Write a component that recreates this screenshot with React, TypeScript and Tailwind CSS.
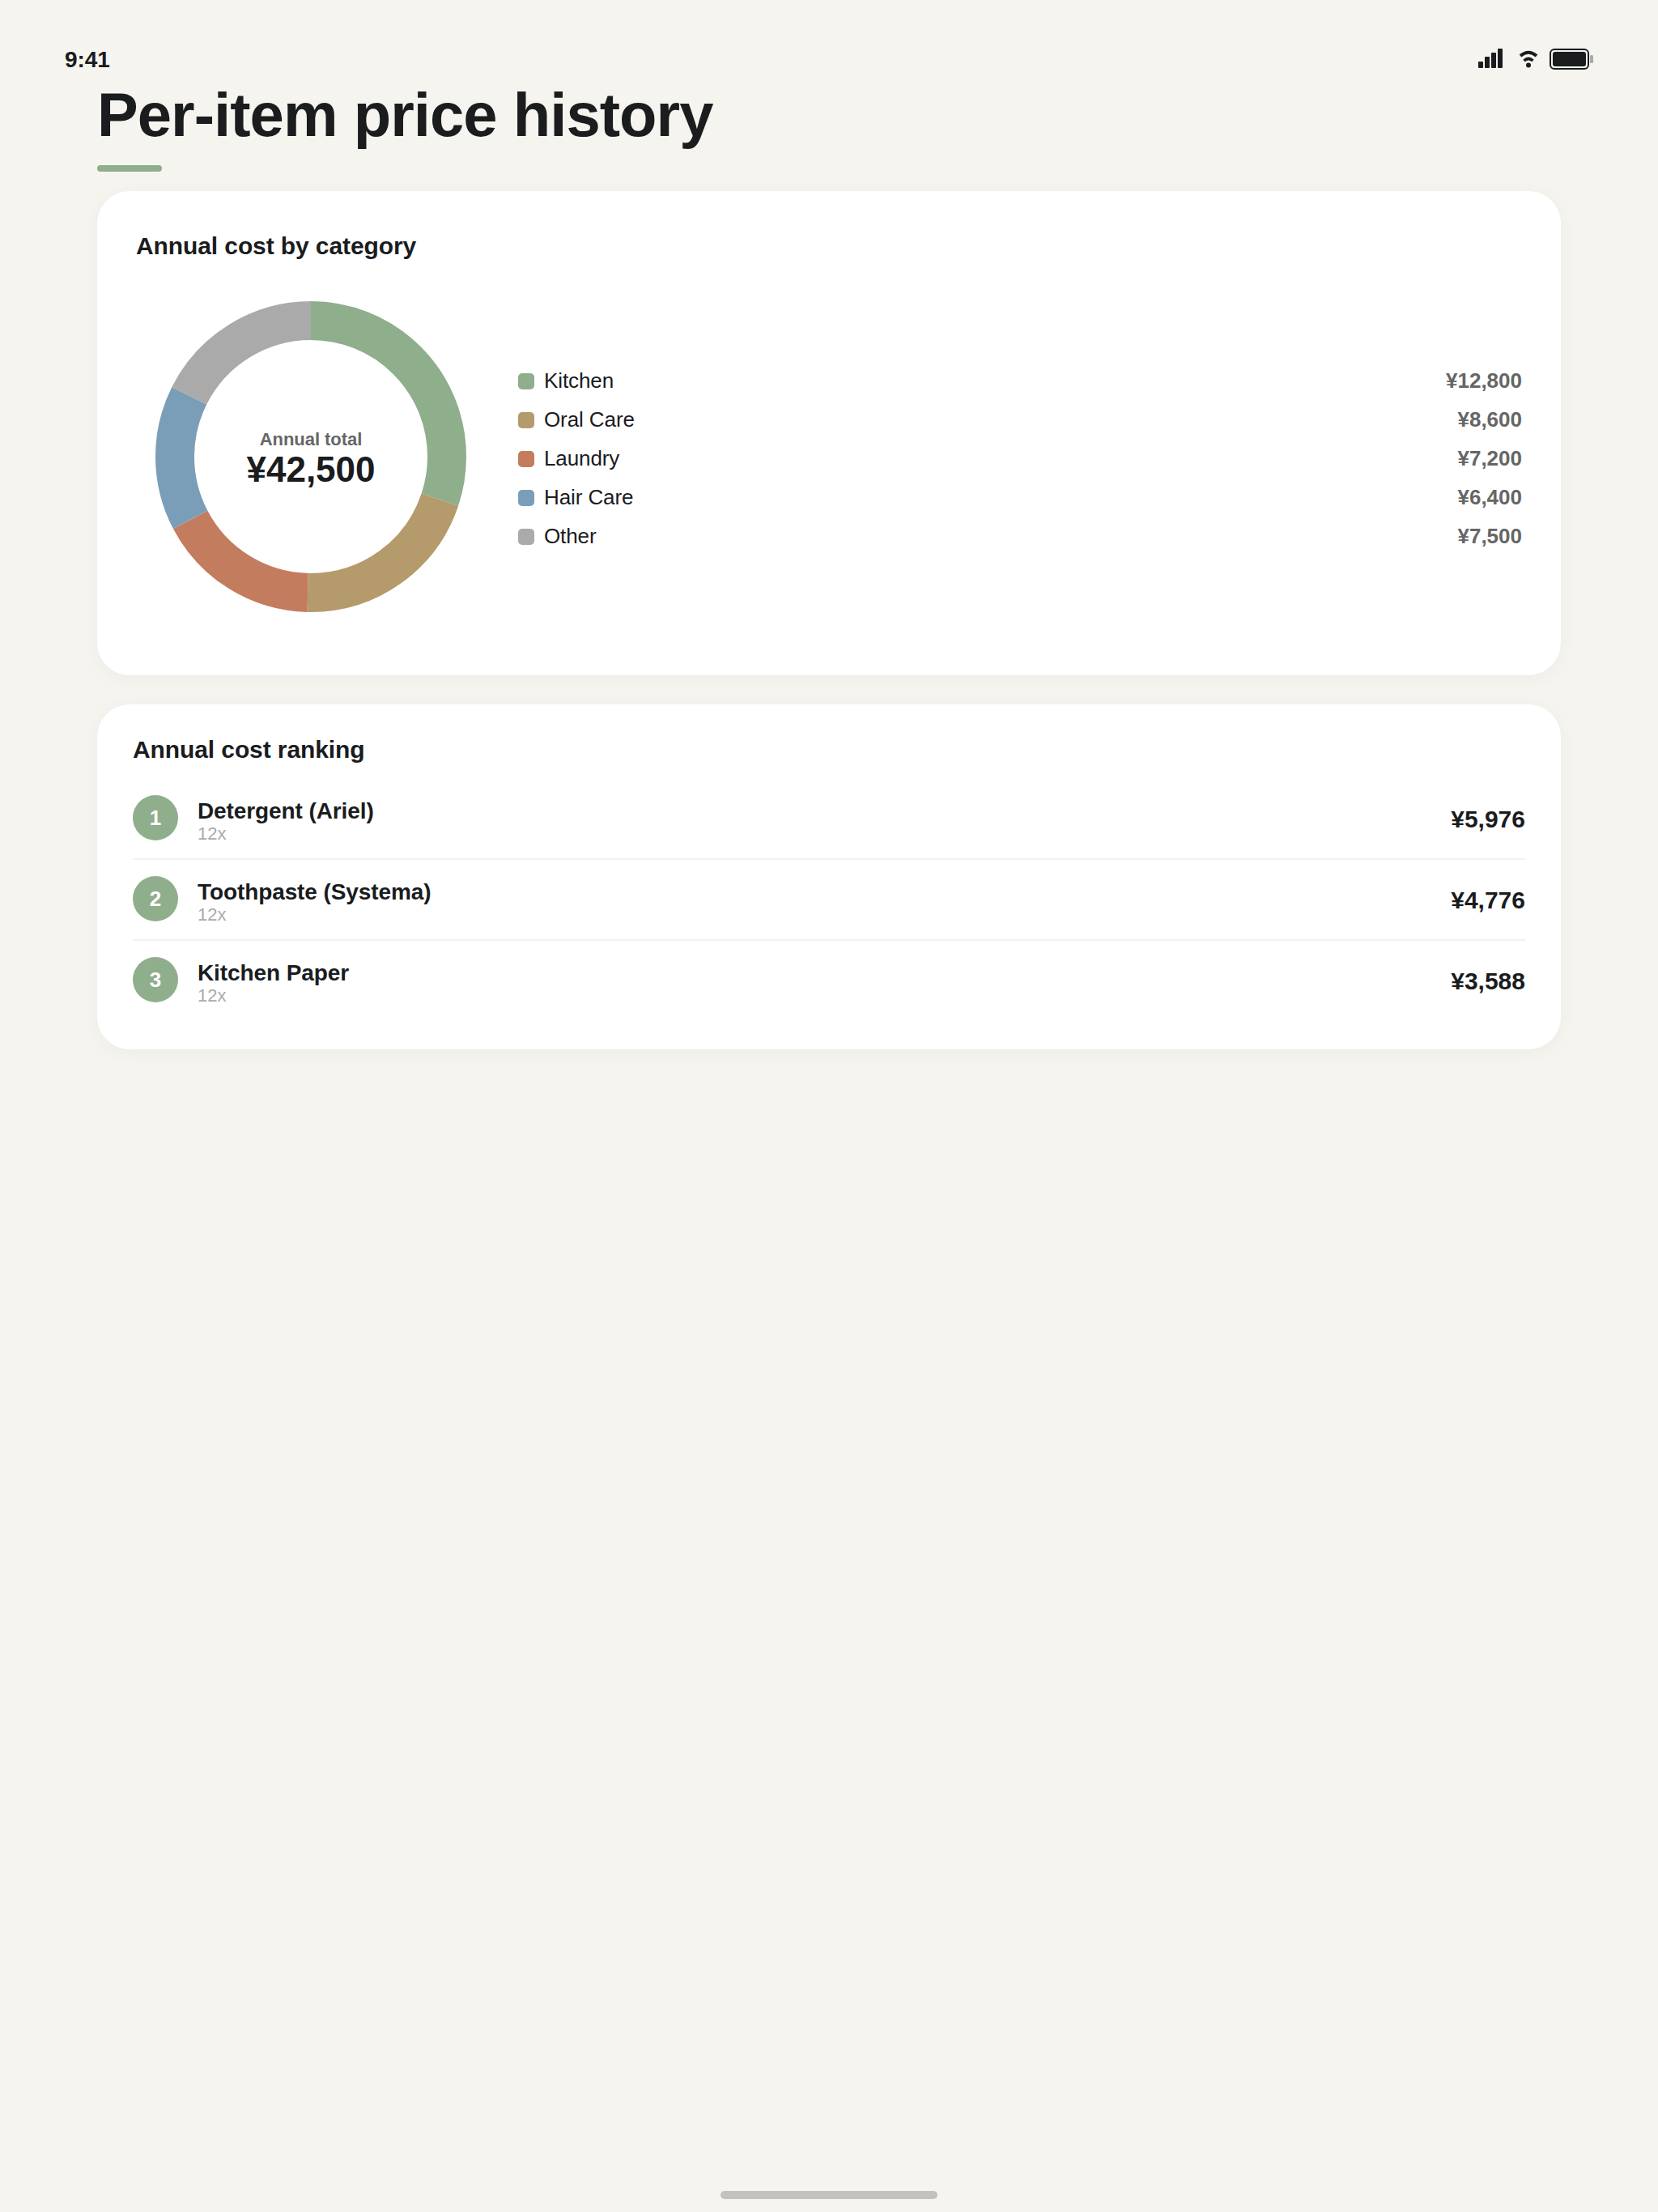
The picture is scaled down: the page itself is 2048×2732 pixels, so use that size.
const font = "[font-family:'Liberation_Sans',Arial,sans-serif]";

const segments = [
  { name: "Kitchen", value: 12800, color: "#8fae8b" },
  { name: "Oral Care", value: 8600, color: "#b59a6b" },
  { name: "Laundry", value: 7200, color: "#c47c5e" },
  { name: "Hair Care", value: 6400, color: "#7a9eb8" },
  { name: "Other", value: 7500, color: "#aaaaaa" },
];
const total = 42500;
const ranks = [
  { n: 1, name: "Detergent (Ariel)", price: "¥5,976" },
  { n: 2, name: "Toothpaste (Systema)", price: "¥4,776" },
  { n: 3, name: "Kitchen Paper", price: "¥3,588" },
];

function Donut() {
  const r = 168;
  const c = 2 * Math.PI * r;
  let acc = 0;
  return (
    <div className="relative w-[384px] h-[384px] shrink-0">
      <svg width="384" height="384" viewBox="0 0 384 384" className="block">
        {segments.map((s) => {
          const len = (s.value / total) * c;
          const el = (
            <circle
              key={s.name}
              cx="192"
              cy="192"
              r={r}
              fill="none"
              stroke={s.color}
              strokeWidth="48"
              strokeDasharray={`${len} ${c - len}`}
              strokeDashoffset={-acc}
              transform="rotate(-90 192 192)"
            />
          );
          acc += len;
          return el;
        })}
      </svg>
      <div className="absolute inset-0 flex flex-col items-center justify-center pt-[6px]">
        <div className="text-[22px] leading-[26px] font-bold text-[#666666] tracking-[-0.05px]">Annual total</div>
        <div className="text-[44px] leading-[50px] font-bold text-[#1a1c1e] mt-[-1px]">¥42,500</div>
      </div>
    </div>
  );
}

function StatusIcons() {
  return (
    <div className="flex items-start">
      <svg width="30" height="24" viewBox="0 0 30 24" className="block">
        <rect x="0" y="16" width="6" height="8" rx="1" fill="#1a1c1e" />
        <rect x="8" y="10" width="6" height="14" rx="1" fill="#1a1c1e" />
        <rect x="16" y="5" width="6" height="19" rx="1" fill="#1a1c1e" />
        <rect x="24" y="0" width="6" height="24" rx="1" fill="#1a1c1e" />
      </svg>
      <svg width="24" height="24" viewBox="0 0 24 24" className="block ml-[20px]">
        <path d="M2 9 Q12 0.5 22 9" fill="none" stroke="#1a1c1e" strokeWidth="4" />
        <path d="M6.5 15 Q12 10 17.5 15" fill="none" stroke="#1a1c1e" strokeWidth="3.6" />
        <circle cx="12" cy="20.5" r="3" fill="#1a1c1e" />
      </svg>
      <svg width="54" height="26" viewBox="0 0 54 26" className="block ml-[14px]">
        <rect x="1" y="1" width="47" height="24" rx="5" fill="none" stroke="#1a1c1e" strokeWidth="2" />
        <rect x="4" y="4" width="41" height="18" rx="3" fill="#1a1c1e" />
        <rect x="50" y="8" width="4" height="10" rx="1.5" fill="#aaaaaa" />
      </svg>
    </div>
  );
}

export default function App() {
  return (
    <div className={`${font} w-[2048px] h-[2732px] bg-[#f5f4ef] flex flex-col text-[#1a1c1e] overflow-hidden`}>
      <div className="flex items-start justify-between pl-[80px] pr-[80px] pt-[57px] h-[90px]">
        <span className="text-[28px] leading-[34px] font-bold tracking-[-0.1px]">9:41</span>
        <div className="mt-[3px]">
          <StatusIcons />
        </div>
      </div>
      <div className="px-[120px]">
        <h1 className="text-[76px] leading-[92px] font-bold tracking-[-0.95px] mt-[6px]">Per-item price history</h1>
        <div className="w-[80px] h-[8px] rounded-[4px] bg-[#8fae8b] mt-[16px]" />
        <section className="mt-[24px] h-[598px] bg-white rounded-[40px] shadow-[0_4px_24px_rgba(0,0,0,0.04)] px-[48px] pt-[48px]">
          <h2 className="text-[30px] leading-[40px] font-bold tracking-[-0.1px]">Annual cost by category</h2>
          <div className="flex items-center mt-[48px] pl-[24px]">
            <Donut />
            <div className="flex-1 ml-[64px] flex flex-col pt-[5px]">
              {segments.map((s) => (
                <div key={s.name} className="flex items-center h-[48px]">
                  <span className="w-[20px] h-[20px] rounded-[5px] shrink-0" style={{ backgroundColor: s.color }} />
                  <span className="ml-[12px] text-[26px] text-[#1a1c1e] tracking-[-0.1px]">{s.name}</span>
                  <span className="ml-auto text-[26px] font-bold text-[#666666]">¥{s.value.toLocaleString("en-US")}</span>
                </div>
              ))}
            </div>
          </div>
        </section>
        <section className="mt-[36px] h-[426px] bg-white rounded-[40px] shadow-[0_4px_24px_rgba(0,0,0,0.04)] px-[44px] pt-[36px]">
          <h2 className="text-[30px] leading-[40px] font-bold tracking-[-0.1px]">Annual cost ranking</h2>
          <div className="mt-[16px] flex flex-col">
            {ranks.map((r, i) => (
              <div key={r.n} className={`flex items-center h-[100px] pb-[2px] border-b-2 ${i < 2 ? "border-[#f2f2f2]" : "border-transparent"}`}>
                <span className="w-[56px] h-[56px] rounded-full bg-[#8fae8b] text-white text-[26px] font-bold flex items-center justify-center shrink-0">{r.n}</span>
                <div className="ml-[24px] flex flex-col mt-[6px]">
                  <span className="text-[28px] leading-[32px] font-bold tracking-[-0.1px]">{r.name}</span>
                  <span className="text-[22px] leading-[23px] text-[#aaaaaa]">12x</span>
                </div>
                <span className="ml-auto text-[30px] font-bold mt-[2px]">{r.price}</span>
              </div>
            ))}
          </div>
        </section>
      </div>
      <div className="mt-auto mb-[16px] mx-auto w-[268px] h-[10px] rounded-[5px] bg-[#c4c2bd]" />
    </div>
  );
}
